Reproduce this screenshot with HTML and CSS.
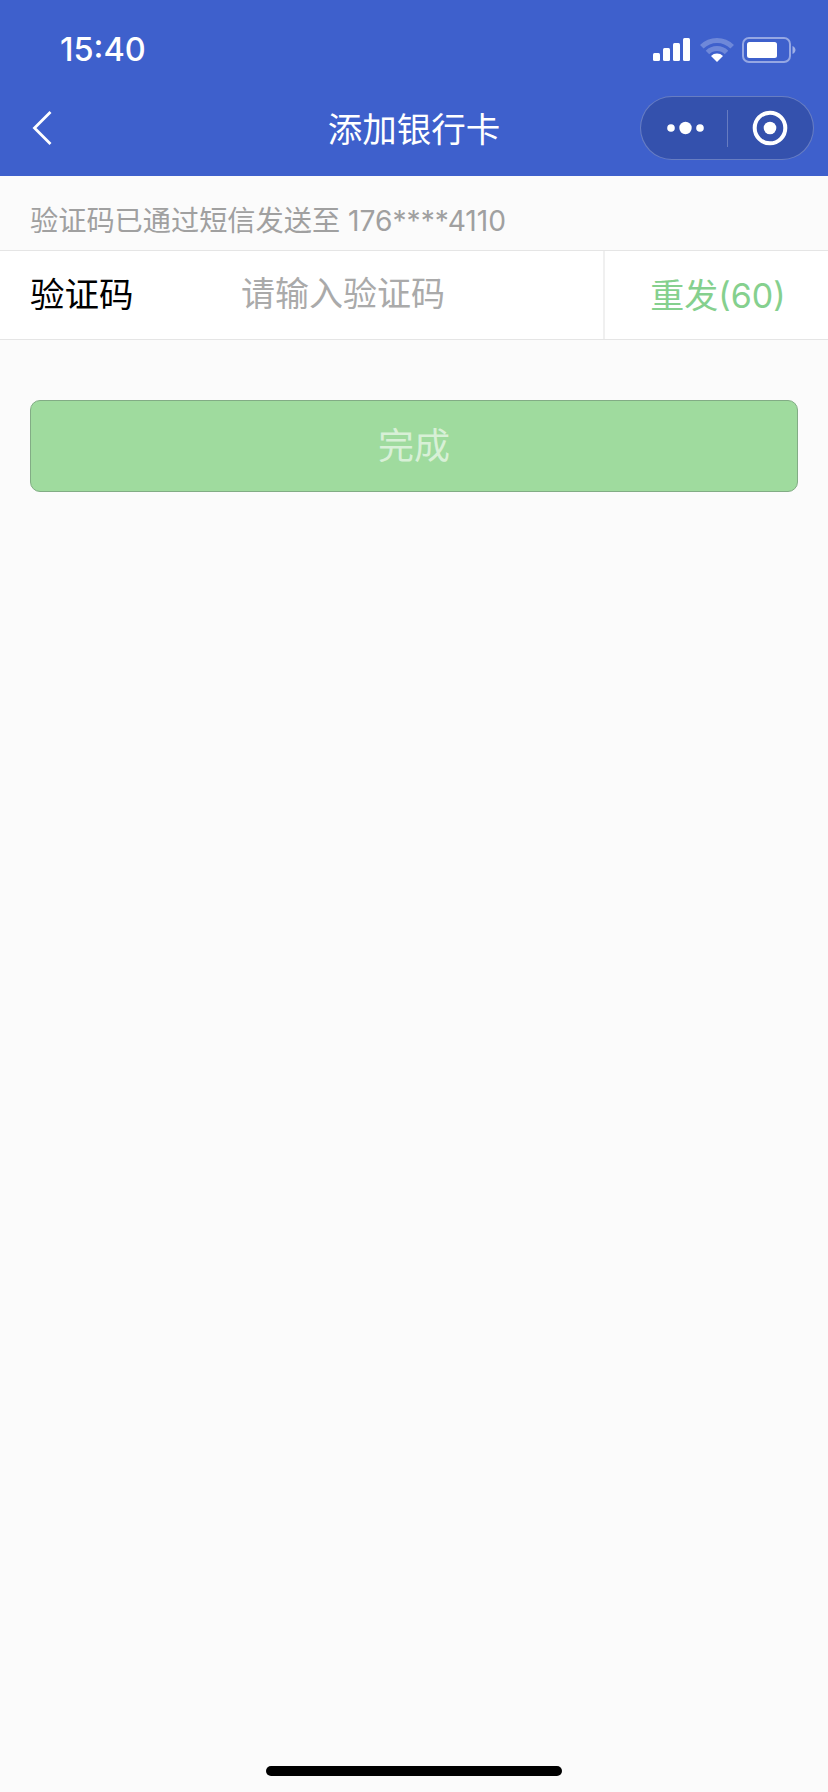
FILE: index.html
```html
<!DOCTYPE html>
<html>
<head>
    <meta charset="utf-8">
    <title>添加银行卡</title>
    <link rel="stylesheet" href="styles.css">
</head>
<body>
<div class="page">
    <div class="header">
        <div class="status">
            <span class="time">15:40</span>
            <div class="status-icons">
                <svg class="signal" width="37" height="23" viewBox="0 0 37 23">
                    <rect x="0" y="15" width="7" height="8" rx="1.5"/>
                    <rect x="10" y="10" width="7" height="13" rx="1.5"/>
                    <rect x="20" y="5" width="7" height="18" rx="1.5"/>
                    <rect x="30" y="0" width="7" height="23" rx="1.5"/>
                </svg>
                <svg class="wifi" width="34" height="24" viewBox="0 0 34 24">
                    <path d="M1.800 8.800 A21.500 21.500 0 0 1 32.200 8.800" fill="none" stroke="#fff" stroke-opacity="0.25" stroke-width="5"/>
                    <path d="M7.500 14.500 A13.500 13.500 0 0 1 26.500 14.500" fill="none" stroke="#fff" stroke-opacity="0.25" stroke-width="5"/>
                    <path d="M17 24 L11 18 A8.500 8.500 0 0 1 23 18 Z" fill="#fff"/>
                </svg>
                <svg class="battery" width="54" height="26" viewBox="0 0 54 26">
                    <rect x="1" y="1" width="47" height="24" rx="6" fill="none" stroke="#fff" stroke-opacity="0.45" stroke-width="2"/>
                    <rect x="5" y="5" width="30" height="16" rx="2.500" fill="#fff"/>
                    <path d="M50.500 9 C52.500 10 53.500 11.500 53.500 13 C53.500 14.500 52.500 16 50.500 17 Z" fill="#fff" opacity="0.5"/>
                </svg>
            </div>
        </div>
        <div class="nav">
            <div class="nav-left">
                <svg width="20" height="36" viewBox="0 0 20 36">
                    <path d="M18.500 2 L2.500 18 L18.500 34" fill="none" stroke="#fff" stroke-width="2.800"/>
                </svg>
            </div>
            <div class="nav-title">添加银行卡</div>
            <div class="nav-right">
                <div class="capsule">
                    <div class="capsule-cell">
                        <svg class="dots" width="40" height="14" viewBox="0 0 40 14">
                            <circle cx="5" cy="7" r="3.800" fill="#fff"/>
                            <circle cx="19.500" cy="7" r="6.200" fill="#fff"/>
                            <circle cx="34" cy="7" r="3.800" fill="#fff"/>
                        </svg>
                    </div>
                    <div class="capsule-line"></div>
                    <div class="capsule-cell">
                        <svg width="36" height="36" viewBox="0 0 36 36">
                            <circle cx="18" cy="18" r="15.300" fill="none" stroke="#fff" stroke-width="4"/>
                            <circle cx="18" cy="18" r="6.300" fill="#fff"/>
                        </svg>
                    </div>
                </div>
            </div>
        </div>
    </div>

    <div class="hint">验证码已通过短信发送至 176****4110</div>

    <div class="code-row">
        <label class="code-label" for="code">验证码</label>
        <input class="code-input" id="code" type="text" placeholder="请输入验证码">
        <div class="resend">重发(60)</div>
    </div>

    <div class="actions">
        <button class="done" type="button">完成</button>
    </div>

    <div class="home-bar"></div>
</div>
</body>
</html>
```

FILE: styles.css
```css
* {
    box-sizing: border-box;
}

body {
    margin: 0;
    background-color: #fbfbfb;
    font-family: "Inter", "Noto Sans CJK SC", sans-serif;
}

.page {
    display: flex;
    flex-direction: column;
    height: 1792px;
}

.header {
    height: 176px;
    background-color: #3e60cc;
    color: #fff;
}

.status {
    display: flex;
    align-items: center;
    justify-content: space-between;
    height: 88px;
    padding: 11px 32px 0 60px;
}

.time {
    font-family: "Inter", sans-serif;
    font-size: 32.5px;
    font-weight: 500;
}

.status-icons {
    display: flex;
    align-items: center;
    gap: 10px;
}

.status-icons svg {
    display: block;
}

.signal {
    fill: #fff;
}

.wifi {
    margin-right: -1px;
}

.battery {
    margin-left: -1px;
}

.nav {
    display: grid;
    grid-template-columns: 1fr auto 1fr;
    align-items: center;
    height: 80px;
}

.nav-left {
    padding-left: 32px;
}

.nav-left svg {
    display: block;
}

.nav-title {
    padding-bottom: 2px;
    font-family: "Noto Sans CJK SC", sans-serif;
    font-size: 34.5px;
}

.nav-right {
    display: flex;
    justify-content: flex-end;
    padding-right: 14px;
}

.capsule {
    display: flex;
    align-items: center;
    width: 174px;
    height: 64px;
    border: 1px solid rgba(255, 255, 255, 0.25);
    border-radius: 32px;
    background-color: rgba(0, 0, 0, 0.15);
}

.capsule-cell {
    display: flex;
    flex: 1;
    align-items: center;
    justify-content: center;
}

.dots {
    margin-left: 4px;
}

.capsule-line {
    width: 1px;
    height: 37px;
    background-color: rgba(255, 255, 255, 0.25);
}

.hint {
    display: flex;
    align-items: center;
    height: 74px;
    padding: 10px 0 0 30px;
    color: #a0a0a0;
    font-size: 28.2px;
}

.code-row {
    display: flex;
    align-items: center;
    height: 90px;
    background-color: #fff;
    border-top: 1px solid #e5e5e5;
    border-bottom: 1px solid #e5e5e5;
}

.code-label {
    width: 241px;
    padding: 0 0 7px 30px;
    color: #000;
    font-size: 34.5px;
}

.code-input {
    flex: 1;
    min-width: 0;
    padding: 0 0 3px;
    border: 0;
    outline: 0;
    background: transparent;
    font-family: inherit;
    font-size: 34px;
}

.code-input::placeholder {
    color: #aaaaaa;
    opacity: 1;
}

.resend {
    display: flex;
    align-items: center;
    justify-content: center;
    width: 225px;
    height: 100%;
    padding: 0 0 4px 3px;
    border-left: 2px solid #f0f0f0;
    color: #85d08e;
    font-size: 34px;
}

.actions {
    padding: 60px 30px 0;
}

.done {
    display: block;
    width: 100%;
    height: 92px;
    padding-bottom: 7px;
    border: 1px solid #82ac85;
    border-radius: 10px;
    background-color: #9fdb9e;
    color: rgba(255, 255, 255, 0.6);
    font-family: "Noto Sans CJK SC", sans-serif;
    font-size: 36px;
}

.home-bar {
    width: 296px;
    height: 10px;
    margin: auto auto 16px;
    border-radius: 5px;
    background-color: #000;
}
```
